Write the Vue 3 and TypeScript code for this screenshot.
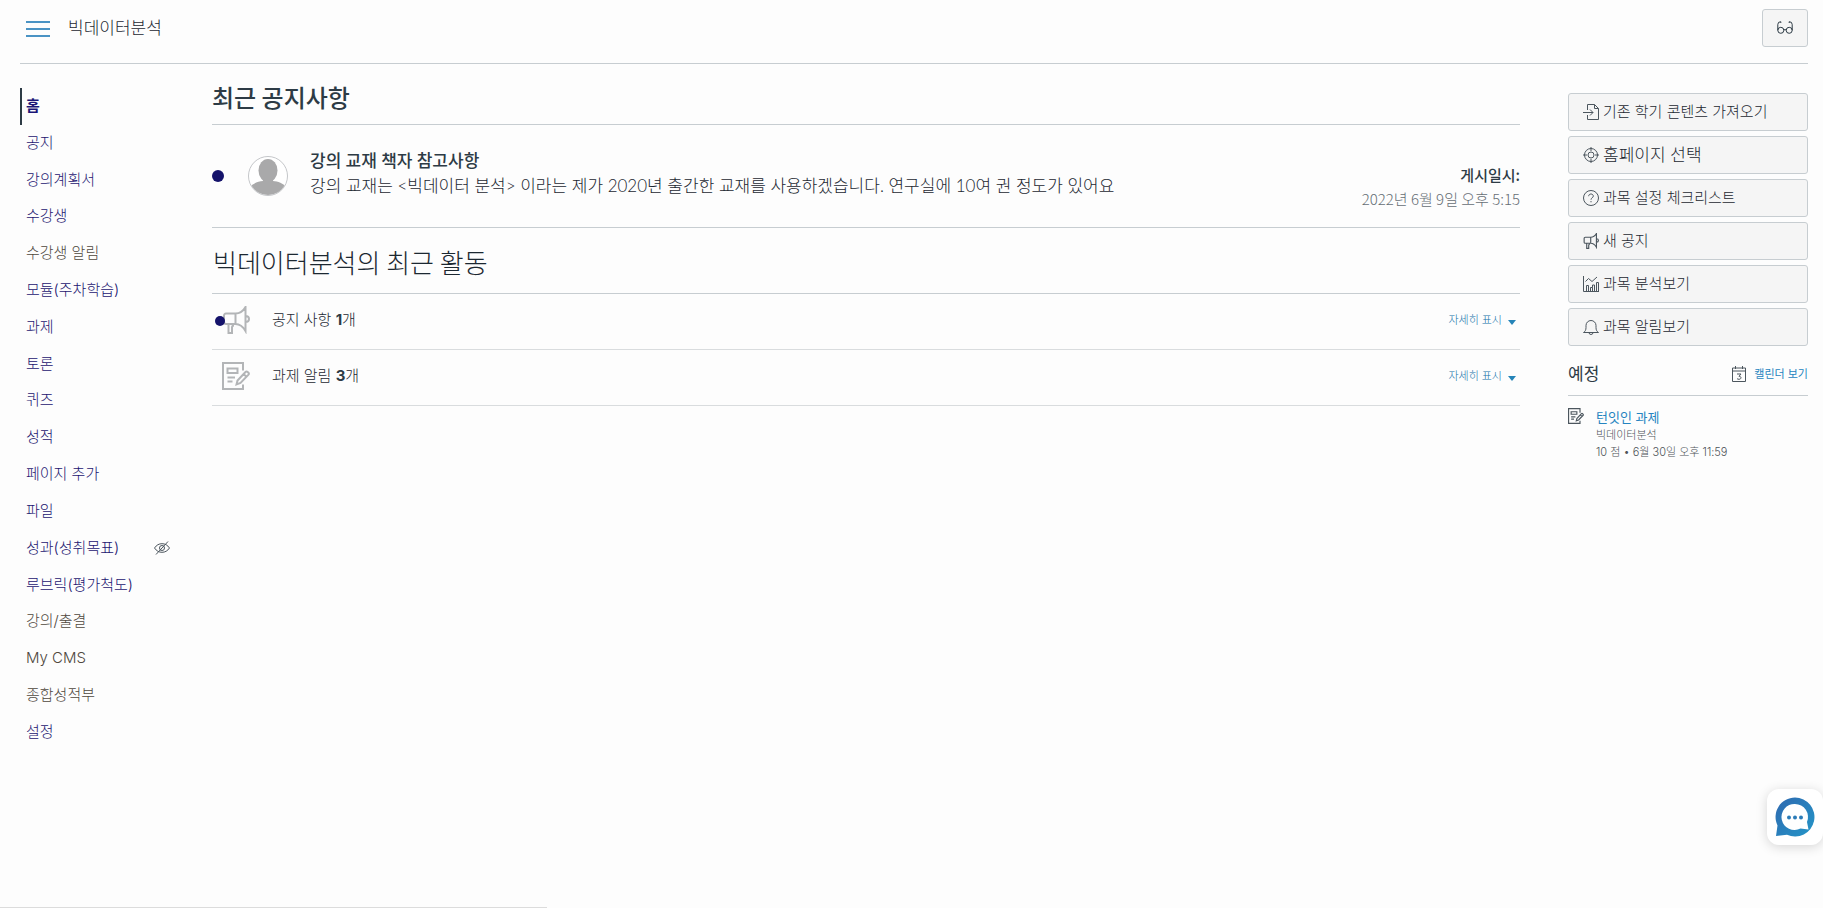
<script setup lang="ts">
interface NavItem {
  label: string
  active?: boolean
  muted?: boolean
  hidden?: boolean
}

interface Action {
  label: string
  icon: string
  large?: boolean
}

interface Activity {
  label: string
  count: number
  icon: string
  unread: boolean
}

const navItems: NavItem[] = [
  { label: '홈', active: true },
  { label: '공지' },
  { label: '강의계획서' },
  { label: '수강생' },
  { label: '수강생 알림', muted: true },
  { label: '모듈(주차학습)' },
  { label: '과제' },
  { label: '토론' },
  { label: '퀴즈' },
  { label: '성적' },
  { label: '페이지 추가' },
  { label: '파일' },
  { label: '성과(성취목표)', hidden: true },
  { label: '루브릭(평가척도)' },
  { label: '강의/출결', muted: true },
  { label: 'My CMS', muted: true },
  { label: '종합성적부', muted: true },
  { label: '설정' },
]

const actions: Action[] = [
  { label: '기존 학기 콘텐츠 가져오기', icon: 'import' },
  { label: '홈페이지 선택', icon: 'target', large: true },
  { label: '과목 설정 체크리스트', icon: 'question' },
  { label: '새 공지', icon: 'horn' },
  { label: '과목 분석보기', icon: 'chart' },
  { label: '과목 알림보기', icon: 'bell' },
]

const activities: Activity[] = [
  { label: '공지 사항', count: 1, icon: 'horn', unread: true },
  { label: '과제 알림', count: 3, icon: 'assignment', unread: false },
]
</script>

<template>
  <svg class="sprite" aria-hidden="true">
    <symbol id="horn" viewBox="0 0 28 28">
      <path d="M4 7.500h9.500C18.500 7.500 21.500 4.500 23.500 1v24C21.500 21.500 18.500 18 13.500 18H4A2 2 0 0 1 2 16V9.500A2 2 0 0 1 4 7.500zM13.500 7.500V18M23.500 10c2 0 3.500 1.300 3.500 3s-1.500 3-3.500 3M6.500 18.500V27h3.500v-5.500c0-1.500.5-2 2-2" />
    </symbol>
    <symbol id="assignment" viewBox="0 0 28 28">
      <path d="M21 8.500V1H1v26h20v-4.500M5.500 6.500h10V11h-10zM5.500 15.500h7.500M5.500 19.500h5" />
      <path d="M14.500 22.500l1-4 8-8.500c1.300-1.300 4.300 1.200 3 2.700l-8 8.300zM21.500 12l3 2.800" />
    </symbol>
    <symbol id="import" viewBox="0 0 16 16">
      <path d="M4.500 6V.5h7l4 4v11h-11V11M11.500.5v4h4M0 8.500h10M7 5.500l3 3-3 3" />
    </symbol>
    <symbol id="target" viewBox="0 0 16 16">
      <path d="M8 1.500a6.500 6.500 0 1 0 0 13a6.500 6.500 0 1 0 0-13zM8 5a3 3 0 1 0 0 6a3 3 0 1 0 0-6zM8 0v4M8 12v4M0 8h4M12 8h4" />
    </symbol>
    <symbol id="question" viewBox="0 0 16 16">
      <path d="M8 .5a7.500 7.500 0 1 0 0 15a7.500 7.500 0 1 0 0-15zM5.700 6.200c0-1.500 1-2.200 2.300-2.200s2.300.8 2.300 2.100c0 1.700-2.300 1.700-2.300 3.600M8 11v1.300" />
    </symbol>
    <symbol id="chart" viewBox="0 0 16 16">
      <path d="M.5 0v15.500H16M3.500 15V9.500h2V15M7.500 15v-3.500h2V15M9.500 11.500V9h2v6M13.500 15V6.500h2V15M2.500 5.500l3-3 3.500 3 5-4.500" />
    </symbol>
    <symbol id="bell" viewBox="0 0 16 16">
      <path d="M.5 13.500c1.700-1 2.500-2.500 2.500-5V6.500a5 5 0 0 1 10 0v2c0 2.500.8 4 2.500 5zM6 13.500a2 2 0 0 0 4 0" />
    </symbol>
    <symbol id="eye-off" viewBox="0 0 16 14">
      <path d="M.5 7C2.500 4 5 2.700 8 2.700S13.500 4 15.500 7C13.500 10 11 11.300 8 11.300S2.500 10 .5 7zM8 4.500a2.500 2.500 0 1 0 0 5a2.500 2.500 0 1 0 0-5zM2 13.500L14 .5" />
    </symbol>
    <symbol id="glasses" viewBox="0 0 16 13">
      <path d="M3.800 6.300a3 3 0 1 0 0 6a3 3 0 1 0 0-6zM12.200 6.300a3 3 0 1 0 0 6a3 3 0 1 0 0-6zM6.800 9q1.200-1 2.400 0M.8 9.300V3.500Q.8.700 3.800.7V2M15.200 9.300V3.500Q15.200.7 12.200.7V2" />
    </symbol>
  </svg>

  <div class="page">
    <header class="top">
      <button class="menu" type="button" aria-label="메뉴">
        <svg viewBox="0 0 24 18" width="24" height="18">
          <path d="M0 2h24M0 9h24M0 16h24" />
        </svg>
      </button>
      <span class="course">빅데이터분석</span>
      <button class="view" type="button" aria-label="학생 보기">
        <svg class="ico glasses"><use href="#glasses" /></svg>
      </button>
    </header>

    <div class="layout">
      <nav class="side">
        <a
          v-for="item in navItems"
          :key="item.label"
          href="#"
          :class="{ active: item.active, muted: item.muted }"
        >
          {{ item.label }}
          <svg v-if="item.hidden" class="ico eye"><use href="#eye-off" /></svg>
        </a>
      </nav>

      <main class="main">
        <h2 class="recent">최근 공지사항</h2>
        <article class="notice">
          <span class="dot"></span>
          <svg class="avatar" viewBox="0 0 40 40" width="40" height="40">
            <defs>
              <clipPath id="face"><circle cx="20" cy="20" r="19" /></clipPath>
            </defs>
            <circle class="ring" cx="20" cy="20" r="19.500" />
            <g clip-path="url(#face)">
              <path class="body" d="M1 40v-8c4-5 9-6.500 14-7h10c5 .5 10 2 14 7v8z" />
              <ellipse class="head" cx="20" cy="14.500" rx="9.500" ry="11.500" />
              <path class="head" d="M15 22h10v5H15z" />
            </g>
          </svg>
          <div class="notice-text">
            <h3>강의 교재 책자 참고사항</h3>
            <p>강의 교재는 &lt;빅데이터 분석&gt; 이라는 제가 2020년 출간한 교재를 사용하겠습니다. 연구실에 10여 권 정도가 있어요</p>
          </div>
          <div class="posted">
            <strong>게시일시:</strong>
            <time datetime="2022-06-09T17:15">2022년 6월 9일 오후 5:15</time>
          </div>
        </article>

        <h2 class="stream">빅데이터분석의 최근 활동</h2>
        <div v-for="a in activities" :key="a.label" class="activity">
          <span class="activity-icon">
            <svg class="ico big"><use :href="'#' + a.icon" /></svg>
            <span v-if="a.unread" class="unread"></span>
          </span>
          <span>{{ a.label }} <b>{{ a.count }}</b>개</span>
          <button class="more" type="button">자세히 표시<i class="caret"></i></button>
        </div>
      </main>

      <aside class="right">
        <div class="actions">
          <button v-for="a in actions" :key="a.label" type="button" :class="{ large: a.large }">
            <svg class="ico" :class="a.icon"><use :href="'#' + a.icon" /></svg>{{ a.label }}
          </button>
        </div>
        <div class="upcoming">
          <h2>예정</h2>
          <a href="#">
            <svg class="ico cal" viewBox="0 0 14 16">
              <path d="M.5 2h13v13.500H.5zM.5 5h13M3.500 0v3M10.500 0v3" />
              <path d="M5 8h4L7 10.300c2.800 0 2.500 3 0 3q-1.300 0-2-.8" />
            </svg>캘린더 보기
          </a>
        </div>
        <div class="todo">
          <svg class="ico todo-icon"><use href="#assignment" /></svg>
          <div>
            <a href="#">턴잇인 과제</a>
            <p>빅데이터분석</p>
            <p>10 점 • 6월 30일 오후 11:59</p>
          </div>
        </div>
      </aside>
    </div>

    <button class="chat" type="button" aria-label="채팅 상담">
      <svg viewBox="0 0 40 40" width="40" height="40">
        <defs>
          <linearGradient id="chat-fill" x1="0" y1="0" x2="1" y2="1">
            <stop offset="0" stop-color="#2f69b0" />
            <stop offset="1" stop-color="#2496c8" />
          </linearGradient>
        </defs>
        <path fill="url(#chat-fill)" d="M20 0.500a19.500 19.500 0 1 1-8 37.300L1 39l1.500-10.500A19.500 19.500 0 0 1 20 .5z" />
        <path fill="#fff" d="M20 7a13 13 0 0 1 12 18l1.500 7.500-8-1A13 13 0 1 1 20 7z" />
        <g fill="#2c7cb8"><circle cx="14" cy="20.500" r="2" /><circle cx="20" cy="20.500" r="2" /><circle cx="26" cy="20.500" r="2" /></g>
      </svg>
    </button>
    <div class="status"></div>
  </div>
</template>

<style>
body {
  background: #fdfdfd;
}
</style>

<style scoped>
.page {
  min-height: 100vh;
  box-sizing: border-box;
  padding: 0 15px 0 20px;
  color: #1c2831;
  font: 300 15px/24px Inter, "Noto Sans CJK KR", sans-serif;
}
.page *,
.page *::before {
  box-sizing: border-box;
}
.sprite {
  position: absolute;
  width: 0;
  height: 0;
}
h2,
h3,
p {
  margin: 0;
}
h3,
b,
strong,
.recent,
.upcoming h2 {
  color: #2d3b45;
}
b {
  font-weight: 700;
}
a {
  color: #2584c0;
  text-decoration: none;
}
button {
  padding: 0;
  border: 0;
  background: none;
  color: inherit;
  font: inherit;
  cursor: pointer;
}
.ico {
  display: block;
  flex: none;
  width: 16px;
  height: 16px;
  fill: none;
  stroke: #4c565e;
  stroke-width: 1;
}
.top {
  display: flex;
  align-items: center;
  height: 64px;
  padding: 0 0 8px 6px;
  border-bottom: 1px solid #c7cdd1;
}
.menu {
  display: flex;
  margin-right: 18px;
  padding-top: 2px;
}
.menu svg {
  stroke: #4a93c4;
  stroke-width: 2;
}
.course {
  font-size: 17px;
}
.view {
  display: grid;
  place-items: center;
  width: 46px;
  height: 38px;
  margin-left: auto;
  border: 1px solid #c7cdd1;
  border-radius: 3px;
  background: #f5f5f5;
}
.glasses {
  height: 13px;
  stroke: #2d3b45;
}
.layout {
  display: grid;
  grid-template-columns: 152px minmax(0, 1fr) 240px;
  align-items: start;
}
.side {
  display: grid;
  grid-auto-rows: minmax(32px, 1fr);
  min-height: 73vh;
  margin-top: 24px;
}
.side a {
  display: flex;
  align-items: center;
  justify-content: space-between;
  padding: 0 2px 1px 6px;
  color: #1c1570;
}
.side a.muted {
  color: #4f483e;
}
.side a.active {
  padding-left: 4px;
  border-left: 2px solid #2d3b45;
  color: #1b1577;
  font-weight: 700;
}
.main {
  padding: 0 48px 0 40px;
}
.recent,
.stream {
  border-bottom: 1px solid #c7cdd1;
  font-family: "Noto Sans CJK KR", sans-serif;
}
.recent {
  padding: 15px 0 9px;
  font-size: 24px;
  line-height: 36px;
  font-weight: 500;
}
.stream {
  padding: 15px 0 13px 1px;
  font-size: 26px;
  line-height: 37px;
  font-weight: 300;
}
.notice {
  display: flex;
  align-items: center;
  min-height: 103px;
  border-bottom: 1px solid #c7cdd1;
  font-family: "Noto Sans CJK KR", sans-serif;
}
.dot {
  flex: none;
  width: 12px;
  height: 12px;
  margin-right: 24px;
  border-radius: 50%;
  background: #15136b;
}
.avatar {
  flex: none;
  margin-right: 22px;
}
.ring {
  fill: #fff;
  stroke: #c4c6c9;
}
.body,
.head {
  fill: #a9a9aa;
}
.notice-text {
  flex: 1;
  padding-bottom: 6px;
  font-family: Lato, "Noto Sans CJK KR", sans-serif;
  font-size: 17px;
  line-height: 25px;
}
.notice-text h3 {
  font-size: 17px;
  font-weight: 500;
}
.posted {
  display: flex;
  flex-direction: column;
  align-items: flex-end;
  padding-top: 22px;
}
.posted strong {
  font-weight: 500;
}
.posted time {
  color: #666e75;
}
.activity {
  display: flex;
  align-items: center;
  height: 56px;
  padding-bottom: 3px;
  border-bottom: 1px solid #d9dcde;
}
.activity-icon {
  position: relative;
  width: 60px;
  padding-left: 10px;
}
.big {
  width: 28px;
  height: 28px;
  stroke: #b3b5b7;
  stroke-width: 2;
}
.unread {
  position: absolute;
  top: 10px;
  left: 3px;
  width: 10px;
  height: 10px;
  border-radius: 50%;
  background: #15136b;
}
.more {
  display: flex;
  align-items: center;
  margin-left: auto;
  padding-right: 4px;
  color: #1271aa;
  font-family: Lato, "Noto Sans CJK KR", sans-serif;
  font-size: 11px;
}
.caret {
  margin: 4px 0 0 6px;
  border: 4px solid transparent;
  border-top: 5px solid #2584b8;
  border-bottom: 0;
}
.actions {
  display: grid;
  gap: 5px;
  margin-top: 29px;
}
.actions button {
  display: flex;
  align-items: center;
  gap: 4px;
  height: 38px;
  padding: 0 14px;
  border: 1px solid #c7cdd1;
  border-radius: 3px;
  background: #f5f5f5;
}
.actions .large {
  font-size: 17px;
}
.actions .horn {
  stroke-width: 2;
}
.upcoming {
  display: flex;
  align-items: center;
  justify-content: space-between;
  padding: 15px 0 7px;
  border-bottom: 1px solid #c7cdd1;
}
.upcoming h2 {
  font-size: 17px;
  line-height: 27px;
  font-weight: 400;
}
.upcoming a {
  display: flex;
  align-items: center;
  gap: 8px;
  padding-bottom: 2px;
  font-size: 11px;
  font-weight: 400;
}
.cal {
  width: 14px;
}
.todo {
  display: flex;
  gap: 12px;
  padding-top: 11px;
}
.todo-icon {
  margin-top: 1px;
  stroke-width: 2;
}
.todo a {
  display: block;
  font-size: 13px;
  line-height: 20px;
  font-weight: 400;
}
.todo p {
  color: #4d5358;
  font-size: 11px;
  line-height: 17px;
}
.chat {
  position: fixed;
  right: 0;
  bottom: 63px;
  display: grid;
  place-items: center;
  width: 56px;
  height: 56px;
  border-radius: 12px;
  background: #fff;
  box-shadow: 0 2px 12px rgba(0, 0, 0, 0.16);
}
.status {
  position: fixed;
  left: 0;
  bottom: 0;
  width: 30%;
  border-top: 1px solid #dcdcdc;
}
</style>
